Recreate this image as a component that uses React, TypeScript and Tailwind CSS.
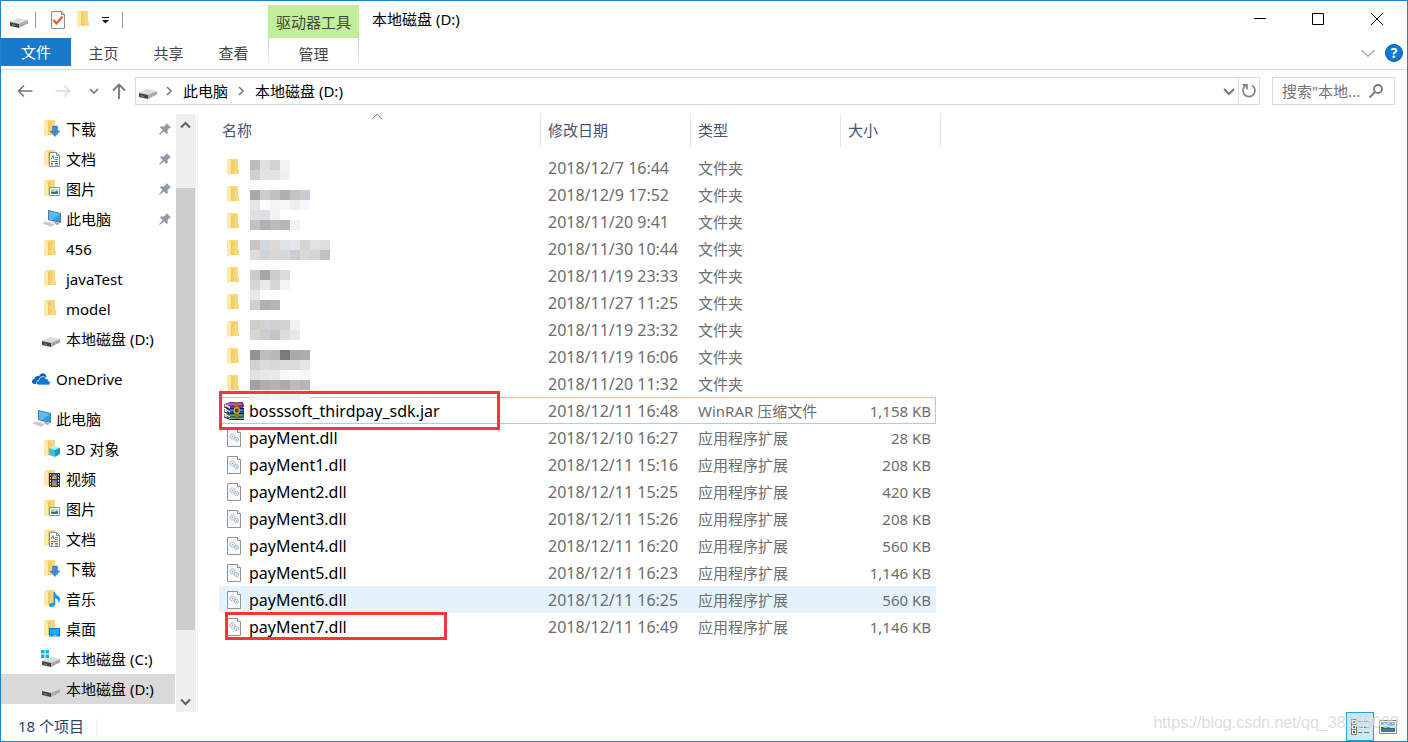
import type { ReactNode } from "react";

type IconName =
  | "folder"
  | "download"
  | "document"
  | "picture"
  | "video"
  | "music"
  | "desktop"
  | "cube"
  | "computer"
  | "drive"
  | "system"
  | "cloud";

type NavItem = {
  id: string;
  label: string;
  icon: IconName;
  pinned?: boolean;
  root?: boolean;
  selected?: boolean;
};

type FileRow = {
  name: string;
  kind: "folder" | "jar" | "dll";
  date: string;
  size?: string;
};

const QUICK_ACCESS: NavItem[] = [
  { id: "q-downloads", label: "下载", icon: "download", pinned: true },
  { id: "q-documents", label: "文档", icon: "document", pinned: true },
  { id: "q-pictures", label: "图片", icon: "picture", pinned: true },
  { id: "q-pc", label: "此电脑", icon: "computer", pinned: true },
  { id: "q-456", label: "456", icon: "folder" },
  { id: "q-java", label: "javaTest", icon: "folder" },
  { id: "q-model", label: "model", icon: "folder" },
  { id: "q-d", label: "本地磁盘 (D:)", icon: "drive" },
];

const ONEDRIVE: NavItem[] = [{ id: "onedrive", label: "OneDrive", icon: "cloud", root: true }];

const THIS_PC: NavItem[] = [
  { id: "pc", label: "此电脑", icon: "computer", root: true },
  { id: "pc-3d", label: "3D 对象", icon: "cube" },
  { id: "pc-videos", label: "视频", icon: "video" },
  { id: "pc-pictures", label: "图片", icon: "picture" },
  { id: "pc-documents", label: "文档", icon: "document" },
  { id: "pc-downloads", label: "下载", icon: "download" },
  { id: "pc-music", label: "音乐", icon: "music" },
  { id: "pc-desktop", label: "桌面", icon: "desktop" },
  { id: "pc-c", label: "本地磁盘 (C:)", icon: "system" },
  { id: "pc-d", label: "本地磁盘 (D:)", icon: "drive", selected: true },
];

const FILES: FileRow[] = [
  { name: "", kind: "folder", date: "2018/12/7 16:44" },
  { name: "", kind: "folder", date: "2018/12/9 17:52" },
  { name: "", kind: "folder", date: "2018/11/20 9:41" },
  { name: "", kind: "folder", date: "2018/11/30 10:44" },
  { name: "", kind: "folder", date: "2018/11/19 23:33" },
  { name: "", kind: "folder", date: "2018/11/27 11:25" },
  { name: "", kind: "folder", date: "2018/11/19 23:32" },
  { name: "", kind: "folder", date: "2018/11/19 16:06" },
  { name: "", kind: "folder", date: "2018/11/20 11:32" },
  { name: "bosssoft_thirdpay_sdk.jar", kind: "jar", date: "2018/12/11 16:48", size: "1,158 KB" },
  { name: "payMent.dll", kind: "dll", date: "2018/12/10 16:27", size: "28 KB" },
  { name: "payMent1.dll", kind: "dll", date: "2018/12/11 15:16", size: "208 KB" },
  { name: "payMent2.dll", kind: "dll", date: "2018/12/11 15:25", size: "420 KB" },
  { name: "payMent3.dll", kind: "dll", date: "2018/12/11 15:26", size: "208 KB" },
  { name: "payMent4.dll", kind: "dll", date: "2018/12/11 16:20", size: "560 KB" },
  { name: "payMent5.dll", kind: "dll", date: "2018/12/11 16:23", size: "1,146 KB" },
  { name: "payMent6.dll", kind: "dll", date: "2018/12/11 16:25", size: "560 KB" },
  { name: "payMent7.dll", kind: "dll", date: "2018/12/11 16:49", size: "1,146 KB" },
];

const TYPE_LABEL = { folder: "文件夹", jar: "WinRAR 压缩文件", dll: "应用程序扩展" };

// Pixelated folder names: [row offset, colours of the 10px cells]
const MOSAIC: [number, string[]][] = [
  [0, ["#bbbdb8", "#dfe0e4", "#d2d3cd", "#f1f2f3"]],
  [10, ["#cfd0ce", "#e2e3e7", "#e2e3e4", "#eff1f1"]],
  [20, ["#fafcfb"]],
  [30, ["#aaa9a8", "#cbcecb", "#c0c2c5", "#b0b0b2", "#c5c4c3", "#cacbd0"]],
  [40, ["#e3e5e8", "#fafcfb", "#f3f3f4", "#f8f6f5", "#eeeeee", "#f6f7fa"]],
  [50, ["#e0e0e1", "#e0dee0", "#f1f2f5"]],
  [60, ["#c5c0c5", "#adb2b6", "#babbb9", "#b8b7b7", "#eff4f8"]],
  [80, ["#c9c4bf", "#d2d8e1", "#ded9d7", "#dfe3e7", "#e4e5e8", "#d3d5d1", "#e2e2e2", "#dededf"]],
  [90, ["#dfdcd9", "#cfd4d7", "#dbd7d7", "#d7d9df", "#cccdd0", "#dadbd9", "#d4d5d8", "#c1c1c1"]],
  [110, ["#cacccd", "#a4a7a3", "#cacdc9", "#dcdbdc"]],
  [120, ["#d6d7d4", "#ebe9e8", "#d4d6d4", "#f4f4f4"]],
  [130, ["#e6e7e9", "#ffffff", "#fcfcfc"]],
  [140, ["#d5cfcb", "#b0b1b4", "#b4b5ba"]],
  [160, ["#cececd", "#d2d3d4", "#cfd1d1", "#d3d3d4", "#f0f2f1"]],
  [170, ["#d9d7d4", "#cbcdd2", "#c3c4c7", "#dcdcdd", "#e8e8e9"]],
  [190, ["#929394", "#bcbebd", "#b9bab8", "#7c7978", "#a8a9ad", "#acadaf"]],
  [200, ["#d0d2d1", "#dddbdb", "#d5d7d9", "#dbdbda", "#dbdcda", "#e5e6e8"]],
  [210, ["#e2e2e2", "#e8e8e8", "#e8e9eb", "#f8f8f8", "#fafafa", "#f5f7f6"]],
  [220, ["#a2a2a1", "#aeafad", "#adb4b4", "#aeaaa8", "#bbbdbc", "#b2b5ba"]],
  [230, ["#f2f2f8", "#f1f2f8", "#f3f5fb", "#f1f2f9", "#eff1f6", "#f7f7fb"]],
];

function FolderShape() {
  return (
    <>
      <path d="M5 1h9v10l1 1v4H6z" fill="#f9d87c" />
      <path d="M6 3h3l-1 13H6z" fill="#eec865" />
      <path d="M9 2h2l-1 14H8z" fill="#f3cf6e" />
      <path d="M3 1h1l3 2v13H6v2L3 16z" fill="#ffe9a8" />
    </>
  );
}

function DriveShape() {
  return (
    <>
      <path d="M1 12l8-4 10 2-9 5z" fill="#dcdcdf" />
      <path d="M1 12l9 2v4l-9-2z" fill="#45474a" />
      <path d="M10 14l9-4v3.500L10 18z" fill="#a9aaae" />
      <path d="M3 14.200l3 .8v1l-3-.8z" fill="#35c044" />
    </>
  );
}

function Icon({ name }: { name: IconName }) {
  const inFolder = ["folder", "download", "document", "picture", "video", "music", "desktop", "cube"];
  return (
    <svg viewBox="0 0 20 20" className="size-5 shrink-0" aria-hidden="true">
      {inFolder.includes(name) && <FolderShape />}
      {name === "download" && (
        <path d="M11.500 7h5v5H19l-5 5.500L9 12h2.500z" fill="#3c8bd9" stroke="#2b73bd" strokeWidth=".5" />
      )}
      {name === "document" && (
        <>
          <path d="M8.500 3.500h7l3 3v11h-10z" fill="#fff" stroke="#8a8d90" />
          <path d="M15.500 3.500v3h3" fill="none" stroke="#8a8d90" />
          <path d="M10 10.500l2-4 1 4M14 8.500h3M14 10.500h3M10 12.500h7M10 14.500h2M14 14.500h3" fill="none" stroke="#2e8ccb" />
          <path d="M10 16h2M14 16h3" stroke="#53708a" />
        </>
      )}
      {name === "picture" && (
        <>
          <path d="M8.500 8.500h10v8h-10z" fill="#fff" stroke="#909396" />
          <path d="M10 10h7v5h-7z" fill="#a9d4f2" />
          <path d="M10 12.500l3 .5 4-1v3h-7z" fill="#34658f" />
          <path d="M10 14l7 .5v.5h-7z" fill="#58995f" />
        </>
      )}
      {name === "video" && (
        <>
          <path d="M8 4h11v14H8z" fill="#373737" />
          <path d="M11 5h5v5h-5z" fill="#4073d8" />
          <path d="M11 8l3-2 2 4h-5z" fill="#e4a23b" />
          <path d="M11 11h5v6h-5z" fill="#5273cc" />
          <path d="M11 14l3-2 2 5h-5z" fill="#c78a3b" />
          <path d="M9.500 5v13M17.500 5v13" stroke="#fff" strokeDasharray="1.500 1.500" />
        </>
      )}
      {name === "music" && (
        <path
          d="M12.500 3h1.500c0 3 5 4 5 7 0 2-1 3-2 4 1-3-.5-4-3-5v6c0 2-1.500 3-3.500 3S8 17 8 16s1.500-2.500 4.500-2z"
          fill="#1297f0"
        />
      )}
      {name === "desktop" && (
        <>
          <path d="M8 9h11v8.500H8z" fill="#0f78cf" />
          <path d="M9 10h9v5.500H9z" fill="#1eaaf5" />
          <path d="M9 16.500h1M12 16.500h4" stroke="#bde7ff" strokeWidth=".7" />
        </>
      )}
      {name === "cube" && (
        <>
          <path d="M8 9l5-2 6 1.500-5 2.500z" fill="#b4eef5" />
          <path d="M8 9l6 2v7l-6-2z" fill="#3cc3dc" />
          <path d="M14 11l5-2.500v6.500L14 18z" fill="#169cb8" />
        </>
      )}
      {name === "computer" && (
        <>
          <path d="M7 1l13 3v10L7 11z" fill="#5d7286" />
          <path d="M8 2.200l11 2.500v8L8 10.200z" fill="#2aa3ee" />
          <path d="M8 2.200l11 2.500-8 6.200-3-.7z" fill="#5bbcf5" />
          <path d="M11 12l5 1.200 3 1.800-3 1z" fill="#9aa5af" />
          <path d="M1 14l5-1.500 8 2.500-4 3z" fill="#d3d8dc" />
          <path d="M2.500 14.200l8 2.600M4.500 13.500l8 2.500" stroke="#a9b0b6" strokeWidth=".6" />
        </>
      )}
      {(name === "drive" || name === "system") && <DriveShape />}
      {name === "system" && (
        <path d="M0 1h3.500v3.500H0zM4.500 1H8v3.500H4.500zM0 5.500h3.500V9H0zM4.500 5.500H8V9H4.500z" fill="#12b4ee" />
      )}
      {name === "cloud" && (
        <>
          <path d="M5 15H4C1.500 15 1 13.500 1 12.500 1 11 2 10 3.500 10 3.500 7 7 6.500 8 7.500 9.500 3 15 3.500 15.500 8z" fill="#0b63b8" />
          <path d="M8 16c-3.500 0-3.500-4.500 0-4.500C8 7 14 6 15 10c2-.5 2.500.5 2.500 2 2.500.5 2 4 0 4z" fill="#0b78d7" stroke="#fff" strokeWidth=".7" />
        </>
      )}
    </svg>
  );
}

function Chevron({ className, d = "M2 5l5 5 5-5" }: { className: string; d?: string }) {
  return (
    <svg viewBox="0 0 14 14" className={`shrink-0 ${className}`} fill="none" stroke="currentColor" aria-hidden="true">
      <path d={d} />
    </svg>
  );
}

function PinIcon() {
  return (
    <svg viewBox="0 0 14 14" className="size-[14px] shrink-0" aria-hidden="true">
      <path d="M8.500 1L13 5.500l-1.500.5-2 2 .3 3-1.300 1L6 9.500 1.500 13 1 12.500 4.500 8 2 5.500l1-1.300 3 .3 2-2z" fill="#8e9ba7" />
    </svg>
  );
}

function FileIcon({ kind }: { kind: FileRow["kind"] }) {
  if (kind === "jar") {
    return (
      <svg viewBox="0 0 20 18" className="h-[18px] w-5 shrink-0" aria-hidden="true">
        <path d="M1 2l5-2h13l1 4-1 2H2z" fill="#7d2e87" />
        <path d="M4 1.500h14l-1 1.500H2z" fill="#c46bc8" />
        <path d="M2 6.500h18V11H3z" fill="#1f48b4" />
        <path d="M5 7.500h14v1.500H5z" fill="#4a88ee" />
        <path d="M2 11.500h18v5H3z" fill="#23733a" />
        <path d="M5 12.500h14v1.500H5z" fill="#43b357" />
        <path d="M1 3l5 2.500M1 7l5 3M1 12l5 3" stroke="#eee" strokeWidth="1.400" />
        <path d="M0 2v3l6 2.500M0 7v3l6 2M0 12v3l6 2.500h14" fill="none" stroke="#1b1b26" />
        <path d="M6 6.500h14M6 11.500h14" stroke="#1b1b26" />
        <path d="M11 0h3.500v17H11z" fill="#9c6a35" />
        <path d="M10.500 6h4.500v5h-4.500z" fill="#5a4320" stroke="#e2bb58" />
      </svg>
    );
  }
  if (kind === "dll") {
    return (
      <svg viewBox="0 0 20 18" className="h-[18px] w-5 shrink-0" aria-hidden="true">
        <path d="M3.500.5h10l3 3v14h-13z" fill="#f8f9fa" stroke="#919496" />
        <path d="M13.500.5v3h3" fill="#fff" stroke="#919496" />
        <circle cx="8.500" cy="7.500" r="2.500" fill="#fff" stroke="#8c9298" strokeDasharray="1.300 .6" />
        <circle cx="8.500" cy="7.500" r="1" fill="#a8adb2" />
        <circle cx="12.500" cy="10.500" r="2" fill="#e8f4fb" stroke="#7fabca" strokeDasharray="1.300 .5" />
        <circle cx="12.500" cy="10.500" r=".7" fill="#8ab8d8" />
      </svg>
    );
  }
  return (
    <svg viewBox="0 0 20 20" className="size-5 shrink-0" aria-hidden="true">
      <FolderShape />
    </svg>
  );
}

function NavGroup({ items }: { items: NavItem[] }) {
  return (
    <ul>
      {items.map((item) => (
        <li key={item.id}>
          <a
            href="#"
            className={`flex h-[30px] items-center gap-[5px] pr-[3px] whitespace-nowrap ${item.root ? "pl-[30px]" : "pl-10"} ${
              item.selected ? "bg-[#d9d9d9]" : "hover:bg-[#e5f3ff]"
            }`}
          >
            <Icon name={item.icon} />
            <span className="flex-1">{item.label}</span>
            {item.pinned && <PinIcon />}
          </a>
        </li>
      ))}
    </ul>
  );
}

function Tab({ children }: { children: ReactNode }) {
  return (
    <button type="button" className="h-7 w-[65px] pt-0.5 text-[#444]">
      {children}
    </button>
  );
}

function TitleBar() {
  return (
    <header className="flex border-b border-[#dadbdc]">
      <div className="w-[267px] shrink-0">
        <div className="flex h-[37px] items-center pl-2">
          <Icon name="drive" />
          <span className="ml-1.5 h-4 w-px bg-[#999]" />
          <button type="button" aria-label="属性" className="ml-3.5">
            <svg viewBox="0 0 16 18" className="h-[18px] w-4">
              <path d="M1.500.5h10l3 3v14h-13z" fill="#f7f9fb" stroke="#8a8d90" />
              <path d="M11.500.5v3h3" fill="none" stroke="#8a8d90" />
              <path d="M3.500 9l3 3.500 6-7" fill="none" stroke="#e8591c" strokeWidth="2" />
            </svg>
          </button>
          <button type="button" aria-label="新建文件夹" className="ml-2">
            <Icon name="folder" />
          </button>
          <button type="button" aria-label="自定义快速访问工具栏" className="ml-2">
            <svg viewBox="0 0 8 8" className="size-2">
              <path d="M0 1.500h7" stroke="#111" />
              <path d="M0 4h7L3.500 7.500z" fill="#111" />
            </svg>
          </button>
          <span className="ml-3 h-4 w-px bg-[#999]" />
        </div>
        <div className="flex">
          <button type="button" className="h-7 w-[70px] bg-[#1979ca] text-white">
            文件
          </button>
          <Tab>主页</Tab>
          <Tab>共享</Tab>
          <Tab>查看</Tab>
        </div>
      </div>
      <div className="w-[91px] shrink-0 pt-1 text-center text-[#444]">
        <div className="flex h-[33px] items-center justify-center bg-[#bff098]">驱动器工具</div>
        <div className="flex h-6">
          <span className="w-px bg-linear-to-b from-[#ccc] to-[#eee]" />
          <button type="button" className="flex-1 pt-1.5">
            管理
          </button>
          <span className="w-px bg-linear-to-b from-[#ccc] to-[#eee]" />
        </div>
      </div>
      <div className="flex min-w-0 flex-1 flex-col">
        <div className="flex h-9 items-center pr-px">
          <h1 className="flex-1 pl-[13px]">本地磁盘 (D:)</h1>
          <button type="button" aria-label="最小化" className="flex h-9 w-[58px] items-center justify-center">
            <svg viewBox="0 0 12 12" className="size-3" stroke="#000">
              <path d="M0 5.500h12" />
            </svg>
          </button>
          <button type="button" aria-label="最大化" className="flex h-9 w-[58px] items-center justify-center">
            <svg viewBox="0 0 12 12" className="size-3" fill="none" stroke="#000">
              <path d="M.5.5h11v11H.5z" />
            </svg>
          </button>
          <button type="button" aria-label="关闭" className="flex h-9 w-[59px] items-center justify-center">
            <svg viewBox="0 0 12 12" className="size-3" stroke="#000">
              <path d="M0 0l12 12M12 0L0 12" />
            </svg>
          </button>
        </div>
        <div className="flex h-8 items-center justify-end gap-[9px] pr-1">
          <button type="button" aria-label="展开功能区" className="text-[#999]">
            <Chevron className="size-4" d="M1.500 4.500L7 10l5.500-5.500" />
          </button>
          <button
            type="button"
            aria-label="帮助"
            className="flex size-[18px] items-center justify-center rounded-full border border-[#0b5ca3] bg-[#0a78d7] text-sm font-bold text-white"
          >
            ?
          </button>
        </div>
      </div>
    </header>
  );
}

function AddressBar() {
  return (
    <nav className="flex items-center py-[7px] pr-3 text-[#777]" aria-label="地址栏">
      <div className="flex w-[134px] shrink-0 items-center pl-4">
        <button type="button" aria-label="后退">
          <svg viewBox="0 0 16 16" className="size-4" fill="none" stroke="#777" strokeWidth="1.600">
            <path d="M15.500 8H1.500M7 2.500L1.500 8 7 13.500" />
          </svg>
        </button>
        <button type="button" aria-label="前进" className="ml-[22px]">
          <svg viewBox="0 0 16 16" className="size-4" fill="none" stroke="#dcdcdc" strokeWidth="1.600">
            <path d="M.5 8h14M9 2.500L14.500 8 9 13.500" />
          </svg>
        </button>
        <button type="button" aria-label="最近浏览的位置" className="ml-4">
          <Chevron className="size-3.5 stroke-[1.6]" d="M3 5l4 4 4-4" />
        </button>
        <button type="button" aria-label="上移" className="ml-2.5">
          <svg viewBox="0 0 16 16" className="size-4" fill="none" stroke="#777" strokeWidth="1.800">
            <path d="M8 16V1.500M2 7.500l6-6 6 6" />
          </svg>
        </button>
      </div>
      <div className="flex h-7 min-w-0 flex-1 items-center border border-[#d9d9d9] pb-px text-black">
        <span className="ml-0.5">
          <Icon name="drive" />
        </span>
        <Chevron className="ml-1 size-3.5 stroke-[1.6] text-[#777]" d="M5 3l4 4-4 4" />
        <a href="#" className="ml-[7px] whitespace-nowrap">此电脑</a>
        <Chevron className="ml-1.5 size-3.5 stroke-[1.6] text-[#777]" d="M5 3l4 4-4 4" />
        <a href="#" className="ml-[7px] flex-1 whitespace-nowrap">本地磁盘 (D:)</a>
        <button type="button" aria-label="以前的位置" className="mr-0.5 text-[#777]">
          <Chevron className="size-3.5 stroke-2" d="M2 5l5 5 5-5" />
        </button>
        <button
          type="button"
          aria-label="刷新"
          className="flex h-full w-[21px] items-center justify-center border-l border-[#d9d9d9]"
        >
          <svg viewBox="0 0 16 16" className="size-4" fill="none" stroke="#888" strokeWidth="1.800">
            <path d="M11 2.500a6 6 0 1 1-6 0" />
            <path d="M1.500 2h4.500v4.500" />
          </svg>
        </button>
      </div>
      <label className="ml-3 flex h-7 w-[123px] shrink-0 items-center border border-[#d9d9d9] pr-2 pl-[9px]">
        <input
          type="text"
          aria-label="搜索"
          placeholder={'搜索"本地...'}
          className="w-[82px] outline-none placeholder:text-[#757575]"
        />
        <svg viewBox="0 0 16 16" className="ml-1 size-4 shrink-0" fill="none" stroke="#777" strokeWidth="1.800">
          <circle cx="10" cy="6" r="4" />
          <path d="M7 9l-5.500 5.500" />
        </svg>
      </label>
    </nav>
  );
}

function Sidebar() {
  return (
    <aside className="flex w-[197px] shrink-0 border-r border-[#f3f3f3]">
      <div className="w-[174px] space-y-2.5">
        <NavGroup items={QUICK_ACCESS} />
        <NavGroup items={ONEDRIVE} />
        <NavGroup items={THIS_PC} />
      </div>
      <div className="ml-px flex w-5 flex-col items-center bg-[#f0f0f0] text-[#606060]">
        <button type="button" aria-label="向上滚动" className="flex h-[21px] items-center">
          <Chevron className="size-3.5 stroke-2" d="M2 9.500L6.500 5l4.500 4.500" />
        </button>
        <div className="flex w-full flex-1 flex-col">
          <div className="grow-[53]" />
          <div className="mr-px grow-[442] bg-[#cdcdcd]" />
          <div className="grow-[61]" />
        </div>
        <button type="button" aria-label="向下滚动" className="flex h-[21px] items-center">
          <Chevron className="size-3.5 stroke-2" d="M2 4.500L6.500 9 11 4.500" />
        </button>
      </div>
    </aside>
  );
}

function FileTable() {
  return (
    <main className="min-w-0 flex-1 pl-[21px]">
      <div className="relative w-fit">
        <table className="block">
          <thead className="block text-[#44546f]">
            <tr className="flex h-[33px] text-left [&>th]:border-r [&>th]:border-[#e5e5e5] [&>th]:pt-1.5 [&>th]:font-normal">
              <th className="relative w-[322px] pl-[3px]">
                名称
                <Chevron className="absolute -top-0.5 left-[152px] size-3 text-[#555]" d="M1.500 8L7 2.500 12.500 8" />
              </th>
              <th className="w-[150px] pl-[7px]">修改日期</th>
              <th className="w-[150px] pl-[7px]">类型</th>
              <th className="w-[100px] pl-[7px]">大小</th>
            </tr>
          </thead>
          <tbody className="block pt-[7px]">
            {FILES.map((file) => (
              <tr
                key={file.date + file.name}
                className={`flex h-[27px] w-[717px] items-center text-[#6d6d6d] ${
                  file.kind === "jar" ? "outline -outline-offset-1 outline-[#99d1ff]" : ""
                } ${file.name === "payMent6.dll" ? "bg-[#e5f3ff]" : ""}`}
              >
                <td className="relative w-[322px]">
                  <div className="flex items-center gap-[5px] pl-[5px] text-black">
                    <FileIcon kind={file.kind} />
                    <span className="text-base">{file.name}</span>
                  </div>
                  {file.kind === "jar" && (
                    <div className="absolute -top-2 left-0 z-10 h-[39px] w-[281px] border-3 border-[#fe3537]" />
                  )}
                  {file.name === "payMent7.dll" && (
                    <div className="absolute -top-[3px] left-1.5 z-10 h-7 w-[222px] border-3 border-[#fe3537]" />
                  )}
                </td>
                <td className="w-[150px] pl-[7px] text-base">{file.date}</td>
                <td className="w-[150px] pl-[7px]">{TYPE_LABEL[file.kind]}</td>
                <td className="w-[95px] pr-[5px] text-right">{file.size}</td>
              </tr>
            ))}
          </tbody>
        </table>
        <svg
          viewBox="0 0 80 240"
          className="pointer-events-none absolute top-[46px] left-[31px] h-[240px] w-20"
          shapeRendering="crispEdges"
          aria-hidden="true"
        >
          {MOSAIC.map(([y, cells]) =>
            cells.map((fill, i) => <rect key={`${y}-${i}`} x={i * 10} y={y} width="10" height="10" fill={fill} />),
          )}
        </svg>
      </div>
    </main>
  );
}

function StatusBar() {
  return (
    <footer className="relative flex h-[29px] items-center text-[#26436b]">
      <span className="pb-0.5 pl-[17px]">18 个项目</span>
      <span className="ml-3 h-4 w-px bg-[#eee]" />
      <div className="ml-auto flex items-center pr-[9px]">
        <button
          type="button"
          aria-label="详细信息"
          className="flex h-[29px] w-7 items-center justify-center border border-[#26a0da] bg-[#cbe8f6]"
        >
          <svg viewBox="0 0 18 18" className="size-[18px]" fill="none" stroke="#777">
            <path d="M.5 1.500h5v5h-5zM.5 6.500h5v5h-5zM.5 11.500h5v5h-5z" fill="#fff" />
            <path d="M7.500 3.500h4M13 3.500h5M7.500 9.500h4M13 9.500h5M7.500 14.500h4M13 14.500h5" />
            <path d="M2 4h2" stroke="#4b8" strokeWidth="2" />
            <path d="M2 9h2" stroke="#47b" strokeWidth="2" />
            <path d="M2 14h2" stroke="#c33" strokeWidth="2" />
          </svg>
        </button>
        <button type="button" aria-label="大缩略图" className="ml-1">
          <svg viewBox="0 0 20 16" className="h-4 w-5">
            <path d="M1.500 1.500h17v13h-17z" fill="#fff" stroke="#888" />
            <path d="M3 3h14v10H3z" fill="#6db3ec" />
            <path d="M3 6l5-1 4 2 5-1v3H3z" fill="#d9eefa" />
            <path d="M3 8l6-.5 4 1.500h4v1L3 11z" fill="#3c6c50" />
            <path d="M3 11l14-1v3H3z" fill="#3a70a8" />
          </svg>
        </button>
      </div>
      <span className="pointer-events-none absolute right-2 bottom-1.5 font-['Liberation_Sans',sans-serif] text-base text-[#d5d5d5]/80">
        https://blog.csdn.net/qq_38365099
      </span>
    </footer>
  );
}

export default function App() {
  return (
    <div className="flex min-h-screen flex-col border border-[#1a80d0] bg-white font-['Noto_Sans','Noto_Sans_CJK_SC',sans-serif] text-[15px] leading-5 text-black">
      <TitleBar />
      <AddressBar />
      <div className="mt-0.5 flex flex-1">
        <Sidebar />
        <FileTable />
      </div>
      <StatusBar />
    </div>
  );
}
